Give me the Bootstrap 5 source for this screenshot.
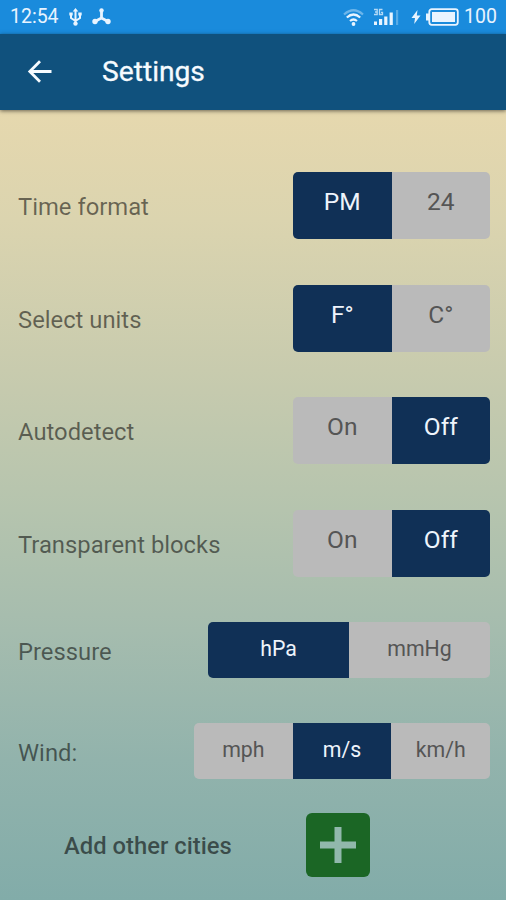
<!DOCTYPE html>
<html lang="en">
<head>
<meta charset="utf-8">
<meta name="viewport" content="width=device-width, initial-scale=1">
<title>Settings</title>
<link href="https://cdn.jsdelivr.net/npm/bootstrap@5.3.0/dist/css/bootstrap.min.css" rel="stylesheet">
<style>
body{font-family:Roboto,"Liberation Sans",sans-serif;width:506px;height:900px;overflow:hidden}
.screen{height:900px;background:linear-gradient(180deg,#e6d8ae 110px,#dbd4af 220px,#c8cbae 370px,#b5c4ae 510px,#a5bcae 630px,#92b3ac 760px,#82aca9 900px)}
.status{height:34px;background:#1a8bdc;color:#e8f4ff;font-size:19.5px;line-height:32px;padding:0 9px 0 10px}
.status svg,.appbar svg{display:block;flex:none}
.usb{margin-left:10px}
.hub{margin-left:10px}
.signal{margin-left:9px}
.bolt{margin-left:11px}
.battery{margin-left:5px}
.level{margin-left:5px}
.appbar{height:75.5px;background:#10517d;box-shadow:0 1px 4px rgba(0,0,0,.55);padding-left:27px}
.appbar h1{font-size:28.2px;font-weight:400;color:#f6fbff;margin:0 0 0 49px;line-height:32px;padding-top:1px;-webkit-text-stroke:.3px #f6fbff}
.settings{padding:62.5px 16px 0 18px}
.setting{height:67px;margin-bottom:45.5px}
.setting.compact{height:56px;margin-bottom:45px}
.setting-name{font-size:23.8px;line-height:28px;padding-top:3px;color:rgba(0,0,0,.53)}
.toggle{height:100%;width:197px}
.toggle .btn{--bs-btn-bg:#bababa;--bs-btn-color:#555;--bs-btn-border-width:0;--bs-btn-border-radius:5px;--bs-btn-font-size:24.5px;flex:1 1 0;padding:0 0 7px;line-height:30px}
.toggle.btn-group>.btn:not(:first-child){margin-left:0}
.toggle .btn.active{background:#103056;color:#eef4fc}
.compact .toggle .btn{--bs-btn-font-size:21.3px;padding-bottom:3px}
.compact .toggle{width:282px}
.compact .toggle.three{width:296px}
.add-city{padding-left:46px;margin-top:-11.5px;gap:74px}
.add-city span{font-size:23.8px;font-weight:500;color:rgba(0,0,0,.57);width:168px;line-height:28px;padding-top:2px}
.add-city .btn{width:64px;height:64px;background:#1b6625;border:0;border-radius:6px}
</style>
</head>
<body>
<main class="screen">
  <div class="status d-flex align-items-center">
    <span class="clock">12:54</span>
    <svg class="usb" width="13" height="18" viewBox="0 0 13 18" fill="none" stroke="#e8f4ff" stroke-width="2"><path d="M6.500 2.500v13M2 6v4l4.500 3M11 6v4l-4.500 3"/><path d="M6.500 0l2.800 3.500H3.700zM.3 4.500h3.400v3H.3zM9.300 4.500h3.400v3H9.300z" fill="#e8f4ff" stroke="none"/><circle cx="6.500" cy="15.600" r="2.200" fill="#e8f4ff" stroke="none"/></svg>
    <svg class="hub" width="19" height="18" viewBox="0 0 19 18" fill="#e8f4ff" stroke="#e8f4ff" stroke-width="2.800"><path d="M9.500 2v8L3 13.500M9.500 10l6.500 3.500" fill="none"/><circle cx="9.500" cy="2.400" r="2.200" stroke="none"/><circle cx="3" cy="13.500" r="2.700" stroke="none"/><circle cx="16" cy="13.500" r="2.700" stroke="none"/></svg>
    <svg class="ms-auto" width="21" height="19" viewBox="0 0 21 19" fill="none" stroke="#e8f4ff" stroke-width="2.200"><path d="M1 6.500Q10.500-2 20 6.500" opacity=".4"/><path d="M3.800 9.500q6.700-6 13.400 0M7 13q3.500-3 7 0"/><circle cx="10.500" cy="16" r="1.900" fill="#e8f4ff" stroke="none"/></svg>
    <svg class="signal" width="27" height="20" viewBox="0 0 27 20" fill="#e8f4ff"><path d="M1 14.500h3V18H1zM6 12h3.200v6H6zM11.200 9.500h3.200V18h-3.200zM16.600 5.500h3.200V18h-3.200z"/><path d="M23 3h2.200v15H23z" opacity=".3"/><path d="M1 2.500h3.200v5H1M2 5h2.200M9.500 2.500H6.500v5h3V5.300H8" fill="none" stroke="#e8f4ff" stroke-width="1.300" opacity=".75"/></svg>
    <svg class="bolt" width="10" height="16" viewBox="0 0 10 16" fill="#e8f4ff"><path d="M6.500 1L.5 9H4l-.8 6L9.500 6.500H5.800z"/></svg>
    <svg class="battery" width="33" height="18" viewBox="0 0 33 18"><rect x="3.300" y="1.200" width="28.500" height="15.600" rx="2.500" fill="none" stroke="#e8f4ff" stroke-width="1.800"/><path d="M6 4h23v10H6zM0 5.500h3v7H0z" fill="#e8f4ff"/></svg>
    <span class="level">100</span>
  </div>
  <header class="appbar d-flex align-items-center position-relative">
    <svg width="26" height="24" viewBox="0 0 26 24" fill="none" stroke="#f6fbff" stroke-width="2.800"><path d="M24.500 11.500H3.500M13 1.300L2.800 11.500 13 21.700"/></svg>
    <h1>Settings</h1>
  </header>
  <section class="settings">
    <div class="setting d-flex align-items-center justify-content-between">
      <span class="setting-name">Time format</span>
      <div class="btn-group toggle"><button class="btn active">PM</button><button class="btn">24</button></div>
    </div>
    <div class="setting d-flex align-items-center justify-content-between">
      <span class="setting-name">Select units</span>
      <div class="btn-group toggle"><button class="btn active">F°</button><button class="btn">C°</button></div>
    </div>
    <div class="setting d-flex align-items-center justify-content-between">
      <span class="setting-name">Autodetect</span>
      <div class="btn-group toggle"><button class="btn">On</button><button class="btn active">Off</button></div>
    </div>
    <div class="setting d-flex align-items-center justify-content-between">
      <span class="setting-name">Transparent blocks</span>
      <div class="btn-group toggle"><button class="btn">On</button><button class="btn active">Off</button></div>
    </div>
    <div class="setting compact d-flex align-items-center justify-content-between">
      <span class="setting-name">Pressure</span>
      <div class="btn-group toggle"><button class="btn active">hPa</button><button class="btn">mmHg</button></div>
    </div>
    <div class="setting compact d-flex align-items-center justify-content-between">
      <span class="setting-name">Wind:</span>
      <div class="btn-group toggle three"><button class="btn">mph</button><button class="btn active">m/s</button><button class="btn">km/h</button></div>
    </div>
    <div class="add-city d-flex align-items-center">
      <span class="text-nowrap">Add other cities</span>
      <button class="btn p-0 d-flex align-items-center justify-content-center" aria-label="Add city"><svg width="36" height="36" viewBox="0 0 36 36" fill="#91b8ac"><path d="M14.500 0h7v14.500H36v7H21.500V36h-7V21.500H0v-7h14.500z"/></svg></button>
    </div>
  </section>
</main>
<script src="https://cdn.jsdelivr.net/npm/bootstrap@5.3.0/dist/js/bootstrap.bundle.min.js"></script>
</body>
</html>
